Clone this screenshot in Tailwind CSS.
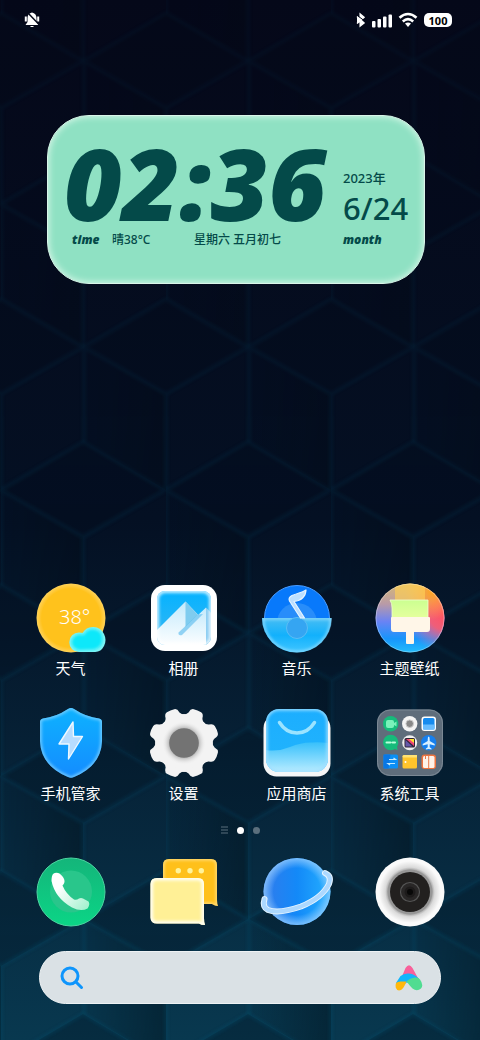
<!DOCTYPE html>
<html lang="zh-CN">
<head>
  <meta charset="UTF-8" />
  <meta name="viewport" content="width=device-width, initial-scale=1.0" />
  <title>桌面</title>
  <script src="https://cdn.jsdelivr.net/npm/@tailwindcss/browser@4"></script>
</head>
<body class="bg-[#040819] text-white font-['Noto_Sans','Noto_Sans_CJK_SC',sans-serif]">
  <div class="relative isolate flex min-h-screen flex-col overflow-hidden bg-linear-to-b from-[#050819] via-[#041023] to-[#08384f]">

    <!-- Wallpaper: cube pattern -->
    <svg class="absolute inset-0 -z-10 h-full w-full" aria-hidden="true">
      <defs>
        <linearGradient id="faceDark"><stop offset="0" stop-color="#00060c" stop-opacity="0" /><stop offset="1" stop-color="#00060c" stop-opacity=".35" /></linearGradient>
        <linearGradient id="fade" x2="0" y2="1"><stop offset="0" stop-color="#fff" stop-opacity=".3" /><stop offset=".4" stop-color="#fff" stop-opacity=".5" /><stop offset="1" stop-color="#fff" /></linearGradient>
        <filter id="soft"><feGaussianBlur stdDeviation="1.500" /></filter>
        <g id="cube">
          <path d="M0 0L82 48L0 95L-82 48Z" fill="#000614" fill-opacity=".25" />
          <path d="M-82 48L0 95V191L-82 143Z" fill="url(#faceDark)" />
          <path d="M82 48L0 95V191M-82 143V48L0 0L82 48M-82 48L0 95" fill="none" stroke="#0d5577" stroke-opacity=".2" stroke-width="4" filter="url(#soft)" />
        </g>
        <pattern id="cubes" width="165" height="286" patternUnits="userSpaceOnUse" patternTransform="translate(1 156)">
          <use href="#cube" x="82" y="0" /><use href="#cube" x="0" y="143" /><use href="#cube" x="165" y="143" />
          <use href="#cube" x="0" y="-143" /><use href="#cube" x="165" y="-143" /><use href="#cube" x="82" y="286" />
        </pattern>
        <mask id="fadeMask"><rect width="100%" height="100%" fill="url(#fade)" /></mask>
      </defs>
      <rect width="100%" height="100%" fill="url(#cubes)" mask="url(#fadeMask)" />
    </svg>

    <!-- Status bar -->
    <header class="flex h-10 items-center justify-between pr-7 pl-6">
      <svg class="size-4" viewBox="0 0 16 16" fill="#fff">
        <path d="M8 .5C10.8 1 12.5 3 12.5 6v4l2 3H1.5l2-3V6C3.500 3 5.200 1 8 .5ZM6.500 14h3v1h-3z" />
        <path d="M.8 4.500h2v5H.8zM13.200 4.500h2v5h-2z" />
        <path d="M3.500 .5L15.500 13" stroke="#050819" stroke-width="1.500" />
      </svg>
      <div class="flex items-center gap-1.5">
        <svg class="h-4 w-2.5" viewBox="0 0 10 16" fill="none" stroke="#fff" stroke-width="1.500">
          <path d="M1 4.500L8 11L4.200 14V2L8 5.200L1 11.500" fill="#fff" /><path d="M2 4l8 6" stroke="#050819" stroke-width="1" />
        </svg>
        <svg class="h-4 w-5" viewBox="0 0 20 16" fill="#fff">
          <rect y="9" width="3.500" height="6.500" rx="1" /><rect x="5.500" y="7" width="3.500" height="8.500" rx="1" /><rect x="11" y="4.500" width="3.500" height="11" rx="1" /><rect x="16.500" y="2.500" width="3.500" height="13" rx="1" />
        </svg>
        <svg class="h-4 w-5" viewBox="0 0 20 16" fill="none" stroke="#fff" stroke-width="2.600">
          <path d="M1.500 5.800Q10-1.800 18.500 5.800M4.800 9.400Q10 5 15.200 9.400" /><path d="M7 11.500Q10 9.500 13 11.500L10 15Z" fill="#fff" stroke="none" />
        </svg>
        <span class="flex h-3.5 w-7 items-center justify-center rounded-[5px] bg-white text-[11px] leading-none font-bold text-black">100</span>
      </div>
    </header>

    <!-- Clock widget -->
    <section class="mt-[75px] mr-[55px] ml-[47px] flex h-[169px] items-start rounded-[42px] border border-[#d9f5e8] bg-[#8fe1c3] pt-7 pl-4 text-[#044a49] shadow-[inset_0_0_6px_1px_#d4f5e6]">
      <div class="w-[279px] shrink-0">
        <div class="h-[88px] text-[100px] leading-[76px] font-black italic">02:36</div>
        <div class="flex h-4 items-center pl-2 text-xs leading-4 font-medium">
          <span class="w-10 font-black italic">time</span>
          <span class="w-[82px]">晴38°C</span>
          <span>星期六 五月初七</span>
        </div>
      </div>
      <div class="flex flex-col pt-6">
        <span class="text-[13px] leading-5 font-medium">2023年</span>
        <span class="h-11 text-[31px] leading-10 font-medium">6/24</span>
        <span class="text-xs leading-4 font-black italic">month</span>
      </div>
    </section>

    <main class="mt-auto px-[14px] pt-10 pb-9">
      <div class="grid grid-cols-4 gap-y-[30px] text-[15px] leading-5">

        <button class="flex flex-col items-center gap-[5px]">
          <svg class="size-[70px]" viewBox="0 0 70 70">
            <defs>
              <radialGradient id="sun"><stop offset=".85" stop-color="#ffc21c" /><stop offset="1" stop-color="#ffd25a" /></radialGradient>
              <filter id="glow"><feGaussianBlur stdDeviation="1.500" /></filter>
            </defs>
            <circle cx="35" cy="35" r="34.500" fill="url(#sun)" />
            <text x="23" y="41" font-size="20" font-family="Noto Sans" font-weight="300" fill="#fff">38°</text>
            <path d="M43 69a9.500 9.500 0 0 1 0-19.500q2 0 3.500.6a12 12 0 0 1 21.500 1q3 6 0 12q-3 6-9 5.900Z" fill="#7ff4f5" />
            <path d="M43 67a7.500 7.500 0 0 1 1-15.500l4 .6a9.500 9.500 0 0 1 18 1.500q2 10-8 13Z" fill="#0ee8fa" filter="url(#glow)" />
          </svg>
          天气
        </button>

        <button class="flex flex-col items-center gap-[5px]">
          <svg class="size-[70px]" viewBox="0 0 70 70">
            <defs>
              <linearGradient id="sky" x2="0" y2="1"><stop offset="0" stop-color="#05b2ff" /><stop offset="1" stop-color="#3ab8f2" /></linearGradient>
              <linearGradient id="snow" x2="0" y2="1"><stop offset="0" stop-color="#c3eafc" /><stop offset="1" stop-color="#fff" /></linearGradient>
              <clipPath id="photo"><rect x="8" y="8" width="54" height="54" rx="8" /></clipPath>
            </defs>
            <rect x="2" y="2" width="66" height="66" rx="14" fill="#fff" />
            <g clip-path="url(#photo)">
              <rect x="8" y="8" width="54" height="54" fill="url(#sky)" />
              <path d="M36.500 18.500L54 37V64H5V50Z" fill="url(#snow)" />
              <path d="M36.500 18.500V44L49 32Z" fill="#7fccef" />
              <path d="M57 24.500L29 51Q29 54 32 52L45 64H57Z" fill="url(#snow)" />
              <path d="M49 31.500L29.500 49.500q-.5 3.500 3.500 2.500L54 31Z" fill="#55b9ed" fill-opacity=".6" />
              <path d="M57 24.500L64 32V64H57Z" fill="#8bcdf2" />
              <rect x="8" y="8" width="54" height="54" rx="8" fill="none" stroke="#fff" stroke-opacity=".8" stroke-width="4" filter="url(#glow)" />
            </g>
          </svg>
          相册
        </button>

        <button class="flex flex-col items-center gap-[5px]">
          <svg class="size-[70px]" viewBox="0 0 70 70">
            <defs>
              <linearGradient id="bowl" x2="0" y2="1"><stop offset="0" stop-color="#48bdf3" /><stop offset=".5" stop-color="#12b1fc" /><stop offset="1" stop-color="#42c6ff" /></linearGradient>
              <clipPath id="bowlClip"><path d="M0 35H70A35 34.500 0 0 1 0 35Z" /></clipPath>
            </defs>
            <circle cx="35" cy="35" r="32.500" fill="#0879fb" stroke="#4a9cff" />
            <circle cx="35" cy="40" r="20" fill="#288dfa" />
            <path d="M0 35H69.500A34.700 34.500 0 0 1 0 35Z" fill="url(#bowl)" />
            <g clip-path="url(#bowlClip)"><path d="M1 35.500H69A34 33.500 0 0 1 1 35.500Z" fill="none" stroke="#9be0ff" stroke-width="2" filter="url(#glow)" /></g>
            <circle cx="35" cy="45" r="10.500" fill="#35a5f2" stroke="#5bbdf5" />
            <path d="M44 7Q43.500 17 32 18.500L42.500 35H38.500L27.500 18Q26 14.500 30 12.500Q34 11 37 10Q41 9 44 7Z" fill="#bcdfff" stroke="#e8f5ff" stroke-width="1.200" stroke-linejoin="round" />
          </svg>
          音乐
        </button>

        <button class="flex flex-col items-center gap-[5px]">
          <svg class="size-[70px]" viewBox="0 0 70 70">
            <defs>
              <linearGradient id="thBase" x2="0" y2="1"><stop offset="0" stop-color="#d7b873" /><stop offset=".3" stop-color="#b89aa8" /><stop offset=".55" stop-color="#6a83f4" /><stop offset=".8" stop-color="#1795fb" /><stop offset="1" stop-color="#22bdfb" /></linearGradient>
              <radialGradient id="thRed" cx="1" cy=".45" r=".55"><stop offset="0" stop-color="#ff5262" /><stop offset=".4" stop-color="#ff5a6c" stop-opacity=".9" /><stop offset="1" stop-color="#d070c0" stop-opacity="0" /></radialGradient>
              <radialGradient id="thOrange" cx=".82" cy=".12" r=".4"><stop offset="0" stop-color="#ffa51f" /><stop offset="1" stop-color="#ffb545" stop-opacity="0" /></radialGradient>
              <linearGradient id="thGreen" x2="0" y2="1"><stop offset="0" stop-color="#cbff91" /><stop offset="1" stop-color="#e5ff9d" /></linearGradient>
              <clipPath id="thClip"><circle cx="35" cy="35" r="34.500" /></clipPath>
            </defs>
            <circle cx="35" cy="35" r="34.500" fill="url(#thBase)" />
            <circle cx="35" cy="35" r="34.500" fill="url(#thRed)" />
            <circle cx="35" cy="35" r="34.500" fill="url(#thOrange)" />
            <path d="M20 0H50V18H20Z" fill="#ffcf55" fill-opacity=".65" clip-path="url(#thClip)" />
            <circle cx="35" cy="35" r="34" fill="none" stroke="#fff" stroke-opacity=".3" />
            <path d="M15 17H53V35H17V25Q17 20 15 17Z" fill="url(#thGreen)" stroke="#f0ffd0" stroke-width=".8" />
            <path d="M17 34H54q1 0 1 1V46q0 3-3 3H39V60q0 1-1 1H32q-1 0-1-1V49H19q-3 0-3-3V35q0-1 1-1Z" fill="#fff6e8" />
          </svg>
          主题壁纸
        </button>

        <button class="flex flex-col items-center gap-[5px]">
          <svg class="size-[70px]" viewBox="0 0 70 70">
            <defs>
              <linearGradient id="shield" x2="0" y2="1"><stop offset="0" stop-color="#0eb2ff" /><stop offset="1" stop-color="#148cff" /></linearGradient>
              <clipPath id="shieldClip"><path id="shieldPath" d="M32 1Q35-1 38 1Q50 9 63 10.500Q66 11 66 14V33Q65 58 38 69Q35 70.500 32 69Q5 58 4 33V14Q4 11 7 10.500Q20 9 32 1Z" /></clipPath>
            </defs>
            <use href="#shieldPath" fill="url(#shield)" />
            <g clip-path="url(#shieldClip)"><use href="#shieldPath" fill="none" stroke="#7cd0ff" stroke-width="3" filter="url(#glow)" /></g>
            <path d="M37 14L23 36H33L32.500 51L46.500 28.500H37.500Z" fill="#b7dcff" stroke="#eef8ff" stroke-width="1.400" stroke-linejoin="round" />
          </svg>
          手机管家
        </button>

        <button class="flex flex-col items-center gap-[5px]">
          <svg class="size-[70px]" viewBox="0 0 70 70">
            <defs>
              <radialGradient id="hub"><stop offset=".55" stop-color="#8a8a8a" /><stop offset="1" stop-color="#f3f3f3" stop-opacity="0" /></radialGradient>
              <path id="tooth" d="M-13-25.500Q-8.500-27-7.500-30Q-7-34.500-4-35Q0-35.700 4-35Q7-34.500 7.500-30Q8.500-27 13-25.500Z" />
            </defs>
            <g transform="translate(35 35)" fill="#f3f3f3">
              <circle r="28.500" />
              <use href="#tooth" transform="rotate(22.500)" /><use href="#tooth" transform="rotate(67.500)" /><use href="#tooth" transform="rotate(112.500)" /><use href="#tooth" transform="rotate(157.500)" />
              <use href="#tooth" transform="rotate(202.500)" /><use href="#tooth" transform="rotate(247.500)" /><use href="#tooth" transform="rotate(292.500)" /><use href="#tooth" transform="rotate(337.500)" />
              <circle r="22" fill="url(#hub)" /><circle r="14.800" fill="#737373" />
            </g>
          </svg>
          设置
        </button>

        <button class="flex flex-col items-center gap-[5px]">
          <svg class="size-[70px]" viewBox="0 0 70 70">
            <defs>
              <linearGradient id="bag" x2="0" y2="1"><stop offset="0" stop-color="#1caeff" /><stop offset="1" stop-color="#22b4fb" /></linearGradient>
              <linearGradient id="wave" x2="0" y2="1"><stop offset="0" stop-color="#38c0fb" /><stop offset="1" stop-color="#b8ecff" /></linearGradient>
              <clipPath id="bagClip"><rect x="4" y="1" width="62" height="63" rx="13" /></clipPath>
            </defs>
            <rect x="1.500" y="7" width="67" height="61.500" rx="13" fill="#f5f6f7" />
            <g clip-path="url(#bagClip)">
              <rect x="4" y="1" width="62" height="63" fill="url(#bag)" />
              <path d="M4 42Q16 44 28 39T50 34.500Q58 34 66 35V64H4Z" fill="url(#wave)" />
              <rect x="4" y="1" width="62" height="63" rx="13" fill="none" stroke="#a2dfff" stroke-width="3" filter="url(#glow)" />
            </g>
            <path d="M17.500 14.500Q24 25 35 25T52.500 14.500" fill="none" stroke="#9be3ff" stroke-width="3.500" stroke-linecap="round" />
          </svg>
          应用商店
        </button>

        <button class="flex flex-col items-center gap-[5px]">
          <svg class="size-[70px]" viewBox="0 0 70 70">
            <rect x="2" y="1.500" width="66" height="66.500" rx="13" fill="#5f6d7b" />
            <rect x="2.500" y="2" width="65" height="65.500" rx="13" fill="none" stroke="#7b8894" />
            <circle cx="15.700" cy="15.700" r="7.700" fill="#16bb7b" /><rect x="11" y="12" width="8" height="8" rx="2" fill="#7af2ba" /><path d="M19 15l2.500-1.500v5L19 17z" fill="#7af2ba" />
            <circle cx="34.700" cy="15.700" r="7.700" fill="#f4f4f4" /><circle cx="34.700" cy="15.700" r="3.800" fill="#888" stroke="#ccc" />
            <rect x="46.500" y="8.500" width="14.500" height="14.500" rx="3" fill="#fff" /><rect x="48" y="10" width="11.500" height="11.500" rx="1.500" fill="#168bef" /><path d="M48 16.500h11.500v5H48z" fill="#68bcff" />
            <circle cx="15.700" cy="34.500" r="7.700" fill="#16bb7b" /><path d="M18 40l4.500 2.200-.5-5z" fill="#16bb7b" /><path d="M11.500 34.500h8.500" stroke="#b9ffdc" stroke-width="2" stroke-linecap="round" stroke-dasharray="4 2" />
            <circle cx="34.700" cy="34.700" r="7.500" fill="#eee" /><rect x="29.500" y="30" width="10.500" height="9.500" rx="1.500" fill="#302638" /><path d="M31 31h8v7z" fill="#f64878" /><path d="M34 31h5v4z" fill="#fbe231" /><path d="M30.500 32l7 6.500h-7z" fill="#6659a9" />
            <circle cx="53.700" cy="34.700" r="7.700" fill="#167fed" /><path d="M53.700 28.500q1 0 1 3v1.500l5 3v1.500l-5-1.300v3l1.800 1.300v1l-2.800-.6-2.800.6v-1l1.800-1.300v-3l-5 1.300V36l5-3v-1.500q0-3 1-3Z" fill="#d7efff" />
            <rect x="8.500" y="46.500" width="14.500" height="14" rx="1.500" fill="#0b8ff5" /><path d="M8.500 46.500h7l-2 14h-5z" fill="#0877e5" /><path d="M14 51.500h6.500l-2-1.500M20 55.500h-7l2 1.500" fill="none" stroke="#c5eaff" stroke-width="1.200" />
            <rect x="27.500" y="47" width="14.500" height="13.500" rx="1.500" fill="#ffc52c" /><path d="M27.500 48.500q0-1.500 1.500-1.500h13v2.500H28z" fill="#ffe275" /><circle cx="30.500" cy="54" r="1" fill="#fff" />
            <rect x="46.500" y="46.500" width="14.500" height="14.500" rx="3" fill="#ef733e" /><rect x="48" y="48" width="11.500" height="12" rx="1.500" fill="#fff3ea" /><path d="M53.700 48v12M50.500 47v4" stroke="#e97949" />
          </svg>
          系统工具
        </button>
      </div>

      <!-- Page indicator -->
      <nav class="mt-5 flex h-[14px] items-center justify-center gap-[9px]">
        <svg class="h-2 w-[7px]" viewBox="0 0 7 8" stroke="#5b6f7d"><path d="M0 1h7M0 4h7M0 7h7" /></svg>
        <span class="size-[7px] rounded-full bg-white"></span>
        <span class="size-[7px] rounded-full bg-[#5b6f7d]"></span>
      </nav>

      <!-- Dock -->
      <div class="mt-5 grid grid-cols-4 justify-items-center">
        <button aria-label="电话">
          <svg class="block size-[70px]" viewBox="0 0 70 70">
            <defs>
              <linearGradient id="call" x2="0" y2="1"><stop offset="0" stop-color="#14b57a" /><stop offset="1" stop-color="#0bd586" /></linearGradient>
              <linearGradient id="handset" x2="1" y2="1"><stop offset=".3" stop-color="#fff" /><stop offset="1" stop-color="#9cf0ca" /></linearGradient>
            </defs>
            <circle cx="35" cy="35" r="34" fill="url(#call)" stroke="#4cd3a0" />
            <circle cx="35" cy="34.500" r="21" fill="#29c68b" />
            <path d="M17 17Q20 15 23.500 16.500Q29 21 28.500 25Q28 27 26.500 28.500Q30 37 38 42.500Q40.500 43.500 43 41.500Q45 40.500 47 41.500L52.500 44.500Q54.500 47 51.500 51.500Q45 55 36 50.500Q19 41 15.500 24Q15.500 19 17 17Z" fill="url(#handset)" />
          </svg>
        </button>
        <button aria-label="短信">
          <svg class="block size-[70px]" viewBox="0 0 70 70">
            <defs>
              <clipPath id="backClip"><path id="backBubble" d="M20 2H62q6 0 6 6V43q0 4 1 6q-3 0-6-2H20q-6 0-6-6V8q0-6 6-6Z" /></clipPath>
              <clipPath id="frontClip"><path id="frontBubble" d="M8 21H49q6 0 6 6V61q0 5 1 7q-4 0-6-1.500H8q-6.500 0-6.500-6V27q0-6 6.500-6Z" /></clipPath>
            </defs>
            <use href="#backBubble" fill="#ffc01a" />
            <g clip-path="url(#backClip)"><use href="#backBubble" fill="none" stroke="#ffe08a" stroke-width="2.500" filter="url(#glow)" /></g>
            <g fill="#fff39a"><circle cx="29.300" cy="13.700" r="2.700" /><circle cx="41" cy="13.700" r="2.700" /><circle cx="52.300" cy="13.700" r="2.700" /></g>
            <use href="#frontBubble" fill="#fff096" />
            <g clip-path="url(#frontClip)"><use href="#frontBubble" fill="none" stroke="#fffef2" stroke-width="5" filter="url(#glow)" /></g>
          </svg>
        </button>
        <button aria-label="浏览器">
          <svg class="block size-[70px] overflow-visible" viewBox="0 0 70 70">
            <defs>
              <linearGradient id="planet"><stop offset=".1" stop-color="#2b7eee" /><stop offset=".5" stop-color="#1389f8" /><stop offset="1" stop-color="#25b0ff" /></linearGradient>
              <radialGradient id="rim"><stop offset=".7" stop-color="#9cd0ff" stop-opacity="0" /><stop offset="1" stop-color="#9cd0ff" stop-opacity=".75" /></radialGradient>
            </defs>
            <circle cx="35" cy="34.500" r="33.500" fill="url(#planet)" /><circle cx="35" cy="34.500" r="33.500" fill="url(#rim)" />
            <path d="M63 16Q70 19 67 27Q60 41 39 49.500Q17 57 6 53Q0 50 2.500 42" fill="none" stroke="#e5f4ff" stroke-width="6" stroke-linecap="round" />
            <path d="M63 16Q70 19 67 27Q60 41 39 49.500Q17 57 6 53Q0 50 2.500 42" fill="none" stroke="#acd8ff" stroke-width="4" stroke-linecap="round" />
          </svg>
        </button>
        <button aria-label="相机">
          <svg class="block size-[70px]" viewBox="0 0 70 70">
            <defs><radialGradient id="lens"><stop offset=".72" stop-color="#aaa" /><stop offset=".8" stop-color="#dadada" /><stop offset="1" stop-color="#fafafa" /></radialGradient></defs>
            <circle cx="35" cy="35" r="34.500" fill="#fafafa" /><circle cx="35" cy="35" r="31" fill="url(#lens)" />
            <circle cx="35" cy="35" r="22.500" fill="#969696" /><circle cx="35" cy="35" r="20" fill="#22201f" />
            <circle cx="35" cy="35" r="9.500" fill="#292727" stroke="#555" stroke-width="1.200" /><circle cx="35" cy="35" r="5.500" fill="#1d1b1b" /><circle cx="35" cy="35" r="3" fill="#080808" />
          </svg>
        </button>
      </div>

      <!-- Search bar -->
      <form class="mx-[25px] mt-6 flex h-[53px] items-center rounded-full border border-[#eef2f4] bg-[#dae1e5] pr-[17px] pl-5">
        <label for="q" class="shrink-0" aria-label="搜索">
          <svg class="block size-6" viewBox="0 0 24 24" fill="none" stroke="#0e95fc" stroke-width="3" stroke-linecap="round"><circle cx="10" cy="10" r="8" /><path d="M16 16l5.500 5.500" /></svg>
        </label>
        <input id="q" type="text" class="min-w-0 flex-1 bg-transparent px-3 text-base text-gray-800 outline-none" />
        <button type="button" aria-label="小爱同学">
          <svg class="block size-7" viewBox="0 0 28 28">
            <path d="M8 10L10.500 4Q14-1.500 17.500 4L24 16L16 18L6 14Z" fill="#f8609a" />
            <path d="M1 19L5.500 12Q9 9 14 9.500Q20 10 24 15L14 19Q11 17.500 10 20L8 21Z" fill="#12b5fb" />
            <path d="M1 19Q3 17 6.500 17.500Q9.500 17.500 11.500 17.500Q9 24 6 26Q2 27.500.7 23.500Q.3 21 1 19Z" fill="#ffb80c" />
            <path d="M11.500 17.500Q15 14 20 13.500Q23.500 13 25 15.500Q29 21 26 24.500Q22 28 17.500 24.500Q15 22 11.500 17.500Z" fill="#50dc91" />
          </svg>
        </button>
      </form>
    </main>
  </div>
</body>
</html>
